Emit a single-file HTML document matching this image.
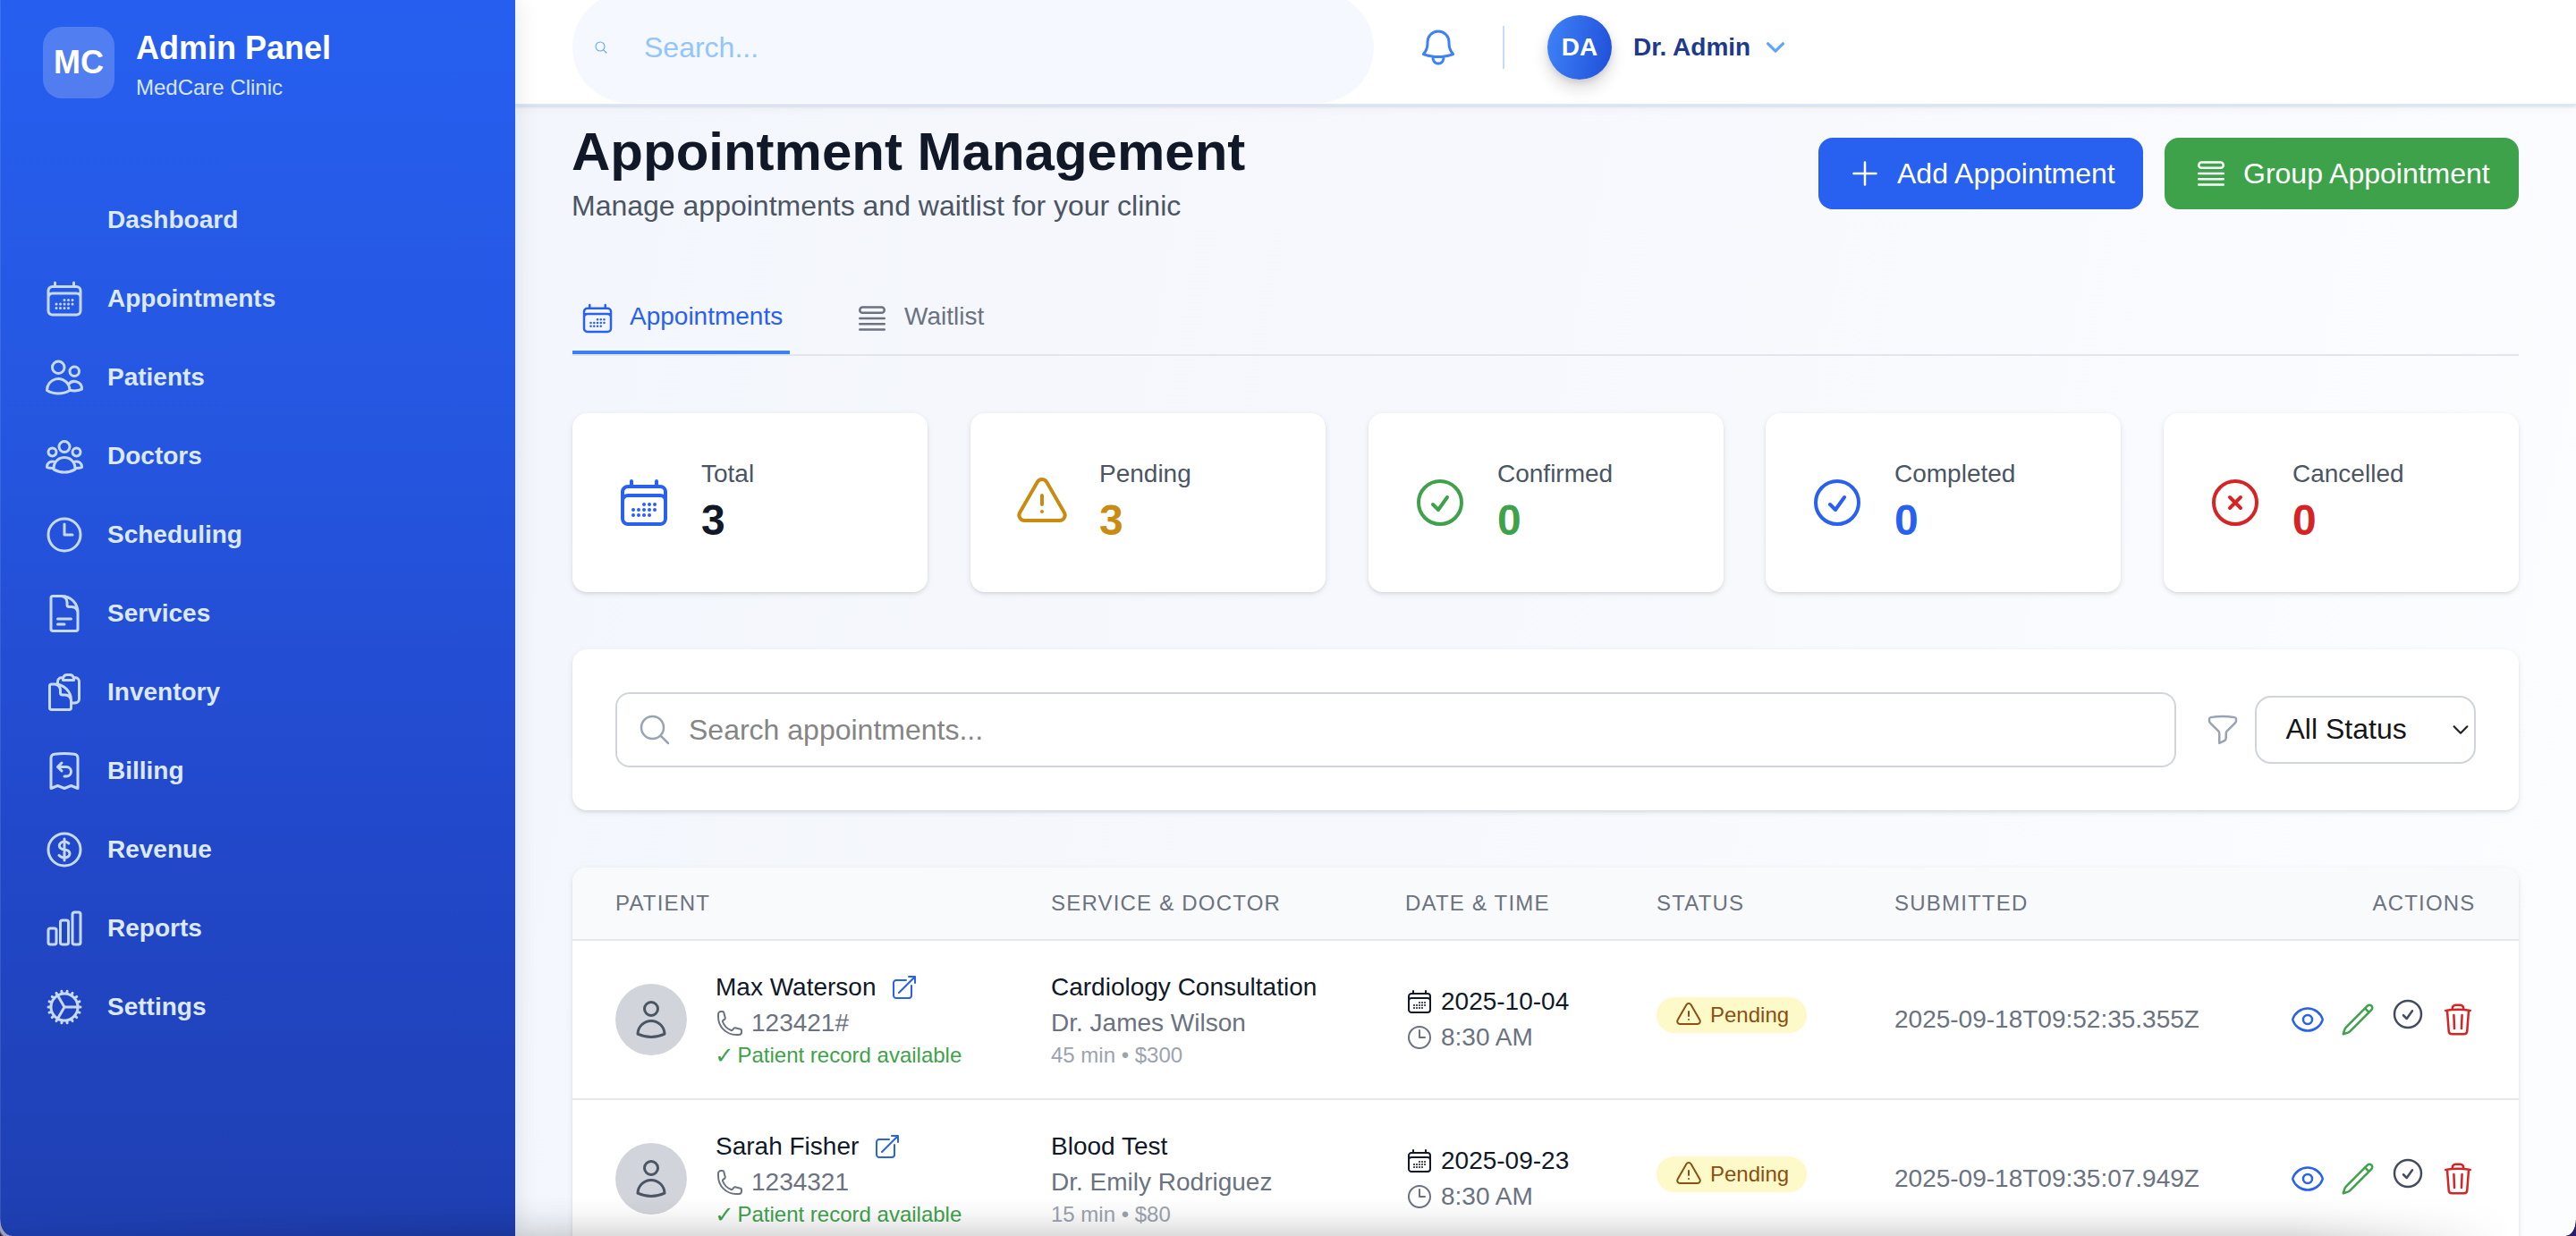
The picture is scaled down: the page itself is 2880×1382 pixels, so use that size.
<!DOCTYPE html>
<html lang="en">
<head>
<meta charset="utf-8">
<title>Appointment Management - MedCare Clinic Admin Panel</title>
<style>
*{box-sizing:border-box;margin:0;padding:0}
html,body{width:2880px;height:1382px;overflow:hidden}
body{position:relative;font-family:"Liberation Sans",Arial,Helvetica,sans-serif;color:#111827;background:#f6f8fd;-webkit-font-smoothing:antialiased}
svg{display:block;flex:none}
.ic{fill:none;stroke:currentColor;stroke-width:1.5;stroke-linecap:round;stroke-linejoin:round}
.abs{position:absolute}

/* main background */
#mainbg{left:576px;top:0;width:2304px;height:1382px;background:linear-gradient(100deg,#f3f6fc 0%,#f6f8fd 45%,#fcfdff 100%)}

/* sidebar */
#side{left:0;top:0;width:576px;height:1382px;background:linear-gradient(180deg,#265fef 0%,#2556e0 35%,#2249cc 65%,#1f3fb2 100%);box-shadow:0 0 26px rgba(15,23,60,.11);z-index:5}
#logo{left:48px;top:30px;width:80px;height:80px;border-radius:21px;background:rgba(255,255,255,.2);color:#fff;font-weight:700;font-size:36px;line-height:80px;text-align:center}
#brand{left:152px;top:26px;color:#fff}
#brand .t{font-size:36px;line-height:56px;font-weight:700;white-space:nowrap}
#brand .s{font-size:24px;line-height:32px;color:#d6e6fe;white-space:nowrap}
#nav{left:0;top:202px;width:576px}
#nav .it{height:88px;display:flex;align-items:center;padding-left:48px;color:#dbe8fe;font-weight:700;font-size:28px;line-height:40px}
#nav .it svg{width:48px;height:48px;margin-right:24px;color:#c6dafd}
#nav .it .noic{width:48px;height:48px;margin-right:24px}

/* top header */
#top{left:576px;top:0;width:2304px;height:118px;background:#fff;border-bottom:2px solid #dbe6fb;box-shadow:0 1px 3px rgba(15,23,42,.13),0 4px 10px rgba(15,23,42,.04);z-index:3;overflow:hidden}
#pill{left:64px;top:-9px;width:896px;height:124px;border-radius:62px;background:#f5f8fe}
#pill svg{position:absolute;left:24px;top:54px;width:16px;height:16px;color:#60a5fa}
#pill .ph{position:absolute;left:80px;top:38px;font-size:32px;line-height:48px;color:#93c5fd}
#bell{left:1008px;top:29px;width:48px;height:48px;color:#3b82f6}
#vdiv{left:1104px;top:29px;width:2px;height:48px;background:#c7dcfc}
#ava{left:1154px;top:17px;width:72px;height:72px;border-radius:50%;background:linear-gradient(100deg,#3f83f8 0%,#1f4fd8 100%);box-shadow:0 10px 18px rgba(0,0,0,.14),0 3px 6px rgba(0,0,0,.10);color:#fff;font-weight:700;font-size:28px;line-height:72px;text-align:center}
#uname{left:1250px;top:33px;font-size:28px;line-height:40px;font-weight:700;color:#1e3a8a;white-space:nowrap}
#chev{left:1393px;top:37px;width:32px;height:32px;color:#60a5fa}

/* page heading */
#title{left:639px;top:133.500px;font-size:60px;line-height:72px;font-weight:700;color:#111827;white-space:nowrap}
#subtitle{left:639px;top:206px;font-size:32px;line-height:48px;color:#4b5563;white-space:nowrap}
.btn{top:154px;height:80px;border-radius:16px;color:#fff;font-size:32px;line-height:48px;display:flex;align-items:center;padding-left:32px;white-space:nowrap}
.btn svg{width:40px;height:40px;margin-right:16px}
#badd{left:2033px;width:363px;background:#2860f0}
#bgrp{left:2420px;width:396px;background:#3ea24a}

/* tabs */
#tabs{left:640px;top:320px;width:2176px;height:78px;border-bottom:2px solid #e3e5ea}
.tab{position:absolute;top:0;height:76px;display:flex;align-items:center;padding:16px 8px 20px;font-size:28px;line-height:40px;white-space:nowrap;color:#6b7280}
.tab svg{width:40px;height:40px;margin-right:16px}
.tab span{position:relative;top:-2px}
.tab.on{color:#2860f0;border-bottom:4px solid #3b80f6;padding-bottom:16px}

/* stat cards */
.card{background:#fff;border-radius:16px;box-shadow:0 2px 6px rgba(0,0,0,.1),0 2px 4px -2px rgba(0,0,0,.1)}
.stat{top:462px;width:397px;height:200px}
.stat svg{position:absolute;left:48px;top:68px;width:64px;height:64px}
.stat .l{position:absolute;left:144px;top:48px;font-size:28px;line-height:40px;color:#4b5563;white-space:nowrap}
.stat .n{position:absolute;left:144px;top:88px;font-size:48px;line-height:64px;font-weight:700;white-space:nowrap}

/* search card */
#scard{left:640px;top:726px;width:2176px;height:180px}
#sinput{left:48px;top:48px;width:1745px;height:84px;border:2px solid #d1d5db;border-radius:16px;background:#fff}
#sinput svg{position:absolute;left:22px;top:20px;width:40px;height:40px;color:#9aa3b2}
#sinput .ph{position:absolute;left:80px;top:16px;font-size:32px;line-height:48px;color:#858585;white-space:nowrap}
#funnel{left:1825px;top:70px;width:40px;height:40px;color:#9aa3b2}
#sel{left:1881px;top:52px;width:247px;height:76px;border:2px solid #d1d5db;border-radius:18px;background:#fff;font-size:32px;line-height:70.500px;padding-left:32.500px;color:#161616;white-space:nowrap}
#sel svg{position:absolute;left:215.750px;top:27.700px;width:24px;height:16px;color:#222}

/* table */
#tcard{left:640px;top:970px;width:2176px;height:460px;overflow:hidden}
#thead{left:0;top:0;width:2176px;height:80px;background:#f9fafc;border-bottom:2px solid #e5e7eb;box-sizing:content-box}
#thead div{position:absolute;top:24px;font-size:24px;line-height:32px;letter-spacing:1.2px;color:#6b7280;white-space:nowrap}
.row{position:absolute;left:0;width:2176px;height:178px;border-bottom:2px solid #e5e7eb;background:#fff}
.row>*{position:absolute}
.avc{left:48px;top:48px;width:80px;height:80px;border-radius:50%;background:#d1d5db;color:#4b5563}
.avc svg{position:absolute;left:16px;top:16px;width:48px;height:48px}
.t28{font-size:28px;line-height:40px;white-space:nowrap}
.t24{font-size:24px;line-height:32px;white-space:nowrap}
.ck{font-family:"DejaVu Sans","Liberation Sans",sans-serif;display:inline-block;width:17.800px;font-size:26px;line-height:20px;text-indent:-1px;position:relative;top:.500px}
.g9{color:#111827}.g5{color:#6b7280}.g4{color:#9ca3af}.gr{color:#3ea24a}
.row svg.s32{width:32px;height:32px}
.row svg.s40{width:40px;height:40px}
.badge{left:1212px;top:63px;width:168px;height:40px;border-radius:20px;background:#fef9c8;color:#8a4f12}
.badge svg{position:absolute;left:20px;top:4px;width:32px;height:32px}
.badge span{position:absolute;left:60px;top:4px;font-size:24px;line-height:32px}

#botshade{left:0;top:1338px;width:2880px;height:44px;z-index:20;background:linear-gradient(180deg,rgba(0,0,0,0) 0%,rgba(0,0,0,.025) 35%,rgba(0,0,0,.075) 70%,rgba(0,0,0,.14) 100%);-webkit-mask-image:linear-gradient(90deg,rgba(0,0,0,.3) 0%,#000 22%,#000 89%,rgba(0,0,0,.55) 93%,transparent 97.500%);mask-image:linear-gradient(90deg,rgba(0,0,0,.3) 0%,#000 22%,#000 89%,rgba(0,0,0,.55) 93%,transparent 97.500%);pointer-events:none}
#cbl{left:0;top:1363px;width:13px;height:19px;z-index:21;background:radial-gradient(ellipse 13px 19px at 100% 0,rgba(0,0,0,0) 95%,#9da1b8 101%,#a3a6b8 116%,#1c1644 134%)}
#ledge{left:0;top:0;width:1px;height:1382px;z-index:20;background:rgba(255,255,255,.11)}
#cbr{left:2869px;top:1364px;width:11px;height:18px;z-index:21;background:radial-gradient(ellipse 11px 18px at 0 0,rgba(0,0,0,0) 94%,#2b1c6c 100%)}
</style>
</head>
<body>
<svg width="0" height="0" style="position:absolute"><defs>
<path id="p-cal" d="M6.750 3v2.250M17.250 3v2.250M3 18.750V7.500a2.250 2.250 0 0 1 2.250-2.250h13.500A2.250 2.250 0 0 1 21 7.500v11.250m-18 0A2.250 2.250 0 0 0 5.250 21h13.500A2.250 2.250 0 0 0 21 18.750m-18 0v-7.500A2.250 2.250 0 0 1 5.250 9h13.500A2.250 2.250 0 0 1 21 11.250v7.500m-9-6h.008v.008H12v-.008ZM12 15h.008v.008H12V15Zm0 2.250h.008v.008H12v-.008ZM9.750 15h.008v.008H9.750V15Zm0 2.250h.008v.008H9.750v-.008ZM7.500 15h.008v.008H7.500V15Zm0 2.250h.008v.008H7.500v-.008Zm6.750-4.500h.008v.008h-.008v-.008Zm0 2.250h.008v.008h-.008V15Zm0 2.250h.008v.008h-.008v-.008Zm2.250-4.500h.008v.008H16.500v-.008Zm0 2.250h.008v.008H16.500V15Z"/>
<path id="p-warn" d="M12 9v3.750m-9.303 3.376c-.866 1.500.217 3.374 1.948 3.374h14.710c1.730 0 2.813-1.874 1.948-3.374L13.949 3.378c-.866-1.500-3.032-1.500-3.898 0L2.697 16.126ZM12 15.750h.007v.008H12v-.008Z"/>
<path id="p-chk" d="M9 12.750 11.250 15 15 9.750M21 12a9 9 0 1 1-18 0 9 9 0 0 1 18 0Z"/>
<path id="p-clock" d="M12 6v6h4.500m4.500 0a9 9 0 1 1-18 0 9 9 0 0 1 18 0Z"/>
<path id="p-user" d="M15.750 6a3.750 3.750 0 1 1-7.500 0 3.750 3.750 0 0 1 7.500 0ZM4.501 20.118a7.500 7.500 0 0 1 14.998 0A17.933 17.933 0 0 1 12 21.750c-2.676 0-5.216-.584-7.499-1.632Z"/>
<path id="p-ext" d="M13.500 6H5.250A2.250 2.250 0 0 0 3 8.250v10.500A2.250 2.250 0 0 0 5.250 21h10.500A2.250 2.250 0 0 0 18 18.750V10.500m-10.500 6L21 3m0 0h-5.250M21 3v5.250"/>
<path id="p-phone" d="M2.250 6.750c0 8.284 6.716 15 15 15h2.250a2.250 2.250 0 0 0 2.250-2.250v-1.372c0-.516-.351-.966-.852-1.091l-4.423-1.106c-.44-.11-.902.055-1.173.417l-.97 1.293c-.282.376-.769.542-1.210.38a12.035 12.035 0 0 1-7.143-7.143c-.162-.441.004-.928.380-1.210l1.293-.97c.363-.271.527-.734.417-1.173L6.963 3.102a1.125 1.125 0 0 0-1.091-.852H4.500A2.250 2.250 0 0 0 2.250 4.500v2.250Z"/>
<path id="p-eye" d="M2.036 12.322a1.012 1.012 0 0 1 0-.639C3.423 7.510 7.360 4.500 12 4.500c4.638 0 8.573 3.007 9.963 7.178.07.207.07.431 0 .639C20.577 16.490 16.640 19.500 12 19.500c-4.638 0-8.573-3.007-9.963-7.178ZM15 12a3 3 0 1 1-6 0 3 3 0 0 1 6 0Z"/>
<path id="p-pen" d="m16.862 4.487 1.687-1.688a1.875 1.875 0 1 1 2.652 2.652L6.832 19.820a4.500 4.500 0 0 1-1.897 1.130l-2.685.8.8-2.685a4.500 4.500 0 0 1 1.130-1.897L16.863 4.487Zm0 0L19.500 7.125"/>
<path id="p-trash" d="m14.740 9-.346 9m-4.788 0L9.260 9m9.968-3.210c.342.052.682.107 1.022.166m-1.022-.165L18.160 19.673a2.250 2.250 0 0 1-2.244 2.077H8.084a2.250 2.250 0 0 1-2.244-2.077L4.772 5.790m14.456 0a48.108 48.108 0 0 0-3.478-.397m-12 .562c.34-.059.68-.114 1.022-.165m0 0a48.110 48.110 0 0 1 3.478-.397m7.500 0v-.916c0-1.180-.91-2.164-2.090-2.201a51.964 51.964 0 0 0-3.320 0c-1.180.037-2.090 1.022-2.090 2.201v.916m7.500 0a48.667 48.667 0 0 0-7.500 0"/>
</defs></svg>
<div id="mainbg" class="abs"></div>

<!-- TOP HEADER -->
<div id="top" class="abs">
  <div id="pill" class="abs">
    <svg viewBox="0 0 24 24" class="ic" style="stroke-width:1.650"><path d="m21 21-5.197-5.197m0 0A7.5 7.5 0 1 0 5.196 5.196a7.5 7.5 0 0 0 10.607 10.607Z"/></svg>
    <div class="ph">Search...</div>
  </div>
  <svg id="bell" class="abs ic" viewBox="0 0 24 24"><path d="M14.857 17.082a23.848 23.848 0 0 0 5.454-1.31A8.967 8.967 0 0 1 18 9.75V9A6 6 0 0 0 6 9v.75a8.967 8.967 0 0 1-2.312 6.022c1.733.64 3.56 1.085 5.455 1.31m5.714 0a24.255 24.255 0 0 1-5.714 0m5.714 0a3 3 0 1 1-5.714 0"/></svg>
  <div id="vdiv" class="abs"></div>
  <div id="ava" class="abs">DA</div>
  <div id="uname" class="abs">Dr. Admin</div>
  <svg id="chev" class="abs ic" viewBox="0 0 32 32" style="stroke-width:3.2"><path d="M7.600 11.800 16 20.200 24.400 11.800"/></svg>
</div>

<!-- SIDEBAR -->
<div id="side" class="abs">
  <div id="logo" class="abs">MC</div>
  <div id="brand" class="abs"><div class="t">Admin Panel</div><div class="s">MedCare Clinic</div></div>
  <div id="nav" class="abs">
    <div class="it"><span class="noic"></span>Dashboard</div>
    <div class="it"><svg viewBox="0 0 24 24" class="ic"><path d="M6.75 3v2.25M17.25 3v2.25M3 18.75V7.5a2.25 2.25 0 0 1 2.25-2.25h13.5A2.25 2.25 0 0 1 21 7.5v11.25m-18 0A2.25 2.25 0 0 0 5.25 21h13.5A2.25 2.25 0 0 0 21 18.75m-18 0v-7.5A2.25 2.25 0 0 1 5.25 9h13.5A2.25 2.25 0 0 1 21 11.25v7.5m-9-6h.008v.008H12v-.008ZM12 15h.008v.008H12V15Zm0 2.25h.008v.008H12v-.008ZM9.75 15h.008v.008H9.75V15Zm0 2.25h.008v.008H9.75v-.008ZM7.5 15h.008v.008H7.5V15Zm0 2.25h.008v.008H7.5v-.008Zm6.75-4.5h.008v.008h-.008v-.008Zm0 2.25h.008v.008h-.008V15Zm0 2.25h.008v.008h-.008v-.008Zm2.25-4.5h.008v.008H16.5v-.008Zm0 2.25h.008v.008H16.5V15Z"/></svg>Appointments</div>
    <div class="it"><svg viewBox="0 0 24 24" class="ic"><path d="M15 19.128a9.38 9.38 0 0 0 2.625.372 9.337 9.337 0 0 0 4.121-.952 4.125 4.125 0 0 0-7.533-2.493M15 19.128v-.003c0-1.113-.285-2.16-.786-3.07M15 19.128v.106A12.318 12.318 0 0 1 8.624 21c-2.331 0-4.512-.645-6.374-1.766l-.001-.109a6.375 6.375 0 0 1 11.964-3.07M12 6.375a3.375 3.375 0 1 1-6.75 0 3.375 3.375 0 0 1 6.75 0Zm8.250 2.25a2.625 2.625 0 1 1-5.250 0 2.625 2.625 0 0 1 5.250 0Z"/></svg>Patients</div>
    <div class="it"><svg viewBox="0 0 24 24" class="ic"><path d="M18 18.72a9.094 9.094 0 0 0 3.741-.479 3 3 0 0 0-4.682-2.72m.94 3.198.001.031c0 .225-.012.447-.037.666A11.944 11.944 0 0 1 12 21c-2.17 0-4.207-.576-5.963-1.584A6.062 6.062 0 0 1 6 18.719m12 0a5.971 5.971 0 0 0-.941-3.197m0 0A5.995 5.995 0 0 0 12 12.750a5.995 5.995 0 0 0-5.058 2.772m0 0a3 3 0 0 0-4.681 2.720 8.986 8.986 0 0 0 3.740.477m.94-3.197a5.971 5.971 0 0 0-.94 3.197M15 6.750a3 3 0 1 1-6 0 3 3 0 0 1 6 0Zm6 3a2.250 2.250 0 1 1-4.500 0 2.250 2.250 0 0 1 4.500 0Zm-13.500 0a2.250 2.250 0 1 1-4.500 0 2.250 2.250 0 0 1 4.500 0Z"/></svg>Doctors</div>
    <div class="it"><svg viewBox="0 0 24 24" class="ic"><path d="M12 6v6h4.500m4.500 0a9 9 0 1 1-18 0 9 9 0 0 1 18 0Z"/></svg>Scheduling</div>
    <div class="it"><svg viewBox="0 0 24 24" class="ic"><path d="M19.500 14.250v-2.625a3.375 3.375 0 0 0-3.375-3.375h-1.500A1.125 1.125 0 0 1 13.500 7.125v-1.500a3.375 3.375 0 0 0-3.375-3.375H8.250m0 12.750h7.500m-7.500 3H12M10.500 2.250H5.625c-.621 0-1.125.504-1.125 1.125v17.250c0 .621.504 1.125 1.125 1.125h12.750c.621 0 1.125-.504 1.125-1.125V11.250a9 9 0 0 0-9-9Z"/></svg>Services</div>
    <div class="it"><svg viewBox="0 0 24 24" class="ic"><path d="M8.250 7.500V6.108c0-1.135.845-2.098 1.976-2.192.373-.03.748-.057 1.123-.08M15.750 18H18a2.250 2.250 0 0 0 2.250-2.250V6.108c0-1.135-.845-2.098-1.976-2.192a48.424 48.424 0 0 0-1.123-.08M15.750 18.750v-1.875a3.375 3.375 0 0 0-3.375-3.375h-1.500a1.125 1.125 0 0 1-1.125-1.125v-1.500A3.375 3.375 0 0 0 6.375 7.500H5.250m11.900-3.664A2.251 2.251 0 0 0 15 2.250h-1.500a2.251 2.251 0 0 0-2.150 1.586m5.800 0c.065.21.1.433.1.664v.750h-6V4.500c0-.231.035-.454.1-.664M6.750 7.500H4.875c-.621 0-1.125.504-1.125 1.125v12c0 .621.504 1.125 1.125 1.125h9.750c.621 0 1.125-.504 1.125-1.125V16.500a9 9 0 0 0-9-9Z"/></svg>Inventory</div>
    <div class="it"><svg viewBox="0 0 24 24" class="ic"><path d="M8.250 9.750h4.875a2.625 2.625 0 0 1 0 5.250H12M8.250 9.750 10.500 7.500M8.250 9.750 10.500 12m9-7.243V21.750l-3.750-1.500-3.750 1.500-3.750-1.500-3.750 1.500V4.757c0-1.108.806-2.057 1.907-2.185a48.507 48.507 0 0 1 11.186 0c1.100.128 1.907 1.077 1.907 2.185Z"/></svg>Billing</div>
    <div class="it"><svg viewBox="0 0 24 24" class="ic"><path d="M12 6v12m-3-2.818.879.659c1.171.879 3.070.879 4.242 0 1.172-.879 1.172-2.303 0-3.182C13.536 12.219 12.768 12 12 12c-.725 0-1.450-.22-2.003-.659-1.106-.879-1.106-2.303 0-3.182s2.900-.879 4.006 0l.415.330M21 12a9 9 0 1 1-18 0 9 9 0 0 1 18 0Z"/></svg>Revenue</div>
    <div class="it"><svg viewBox="0 0 24 24" class="ic"><path d="M3 13.125C3 12.504 3.504 12 4.125 12h2.250c.621 0 1.125.504 1.125 1.125v6.750C7.500 20.496 6.996 21 6.375 21h-2.250A1.125 1.125 0 0 1 3 19.875v-6.750ZM9.750 8.625c0-.621.504-1.125 1.125-1.125h2.250c.621 0 1.125.504 1.125 1.125v11.250c0 .621-.504 1.125-1.125 1.125h-2.250a1.125 1.125 0 0 1-1.125-1.125V8.625ZM16.500 4.125c0-.621.504-1.125 1.125-1.125h2.250C20.496 3 21 3.504 21 4.125v15.750c0 .621-.504 1.125-1.125 1.125h-2.250a1.125 1.125 0 0 1-1.125-1.125V4.125Z"/></svg>Reports</div>
    <div class="it"><svg viewBox="0 0 24 24" class="ic"><path d="M4.500 12a7.500 7.500 0 0 0 15 0m-15 0a7.500 7.500 0 1 1 15 0m-15 0H3m16.500 0H21m-1.500 0H12m-8.457 3.077 1.410-.513m14.095-5.130 1.410-.513M5.106 17.785l1.150-.964m11.490-9.642 1.149-.964M7.501 19.795l.750-1.300m7.500-12.990.750-1.300m-6.063 16.658.260-1.477m2.605-14.772.260-1.477m0 17.726-.260-1.477M10.698 4.614l-.260-1.477M16.500 19.794l-.750-1.299M7.500 4.205 12 12m6.894 5.785-1.149-.964M6.256 7.178l-1.150-.964m15.352 8.864-1.410-.513M4.954 9.435l-1.410-.514M12.002 12l-3.750 6.495"/></svg>Settings</div>
  </div>
</div>


<div id="title" class="abs">Appointment Management</div>
<div id="subtitle" class="abs">Manage appointments and waitlist for your clinic</div>
<div id="badd" class="abs btn"><svg viewBox="0 0 24 24" class="ic"><path d="M12 4.500v15m7.500-7.500h-15"/></svg>Add Appointment</div>
<div id="bgrp" class="abs btn"><svg viewBox="0 0 24 24" class="ic"><path d="M3.750 12h16.500m-16.500 3.750h16.500M3.750 19.500h16.500M5.625 4.500h12.750a1.875 1.875 0 0 1 0 3.750H5.625a1.875 1.875 0 0 1 0-3.750Z"/></svg>Group Appointment</div>

<div id="tabs" class="abs">
  <div class="tab on" style="left:0"><svg viewBox="0 0 24 24" class="ic"><use href="#p-cal"/></svg><span>Appointments</span></div>
  <div class="tab" style="left:307px"><svg viewBox="0 0 24 24" class="ic"><path d="M3.750 12h16.500m-16.500 3.750h16.500M3.750 19.500h16.500M5.625 4.500h12.750a1.875 1.875 0 0 1 0 3.750H5.625a1.875 1.875 0 0 1 0-3.750Z"/></svg><span>Waitlist</span></div>
</div>

<div class="abs card stat" style="left:640px"><svg viewBox="0 0 24 24" class="ic" style="color:#2860f0"><use href="#p-cal"/></svg><div class="l">Total</div><div class="n" style="color:#111827">3</div></div>
<div class="abs card stat" style="left:1085px"><svg viewBox="0 0 24 24" class="ic" style="color:#c98b10"><use href="#p-warn"/></svg><div class="l">Pending</div><div class="n" style="color:#c98b10">3</div></div>
<div class="abs card stat" style="left:1530px"><svg viewBox="0 0 24 24" class="ic" style="color:#3ea24a"><use href="#p-chk"/></svg><div class="l">Confirmed</div><div class="n" style="color:#3ea24a">0</div></div>
<div class="abs card stat" style="left:1974px"><svg viewBox="0 0 24 24" class="ic" style="color:#2860f0"><use href="#p-chk"/></svg><div class="l">Completed</div><div class="n" style="color:#2860f0">0</div></div>
<div class="abs card stat" style="left:2419px"><svg viewBox="0 0 24 24" class="ic" style="color:#d62324"><path d="m9.750 9.750 4.500 4.500m0-4.500-4.500 4.500M21 12a9 9 0 1 1-18 0 9 9 0 0 1 18 0Z"/></svg><div class="l">Cancelled</div><div class="n" style="color:#d62324">0</div></div>


<div id="scard" class="abs card">
  <div id="sinput" class="abs"><svg viewBox="0 0 24 24" class="ic"><path d="m21 21-5.197-5.197m0 0A7.500 7.500 0 1 0 5.196 5.196a7.500 7.500 0 0 0 10.607 10.607Z"/></svg><div class="ph">Search appointments...</div></div>
  <svg id="funnel" class="abs ic" viewBox="0 0 24 24"><path d="M12 3c2.755 0 5.455.232 8.083.678.533.09.917.556.917 1.096v1.044a2.250 2.250 0 0 1-.659 1.591l-5.432 5.432a2.250 2.250 0 0 0-.659 1.591v2.927a2.250 2.250 0 0 1-1.244 2.013L9.750 21v-6.568a2.250 2.250 0 0 0-.659-1.591L3.659 7.409A2.250 2.250 0 0 1 3 5.818V4.774c0-.54.384-1.006.917-1.096A48.320 48.320 0 0 1 12 3Z"/></svg>
  <div id="sel" class="abs">All Status<svg viewBox="0 0 24 16" class="ic" style="stroke-width:2.200"><path d="M4.600 4.300 12 11.700 19.400 4.300"/></svg></div>
</div>

<div id="tcard" class="abs card">
  <div id="thead" class="abs">
    <div style="left:48px">PATIENT</div>
    <div style="left:535px">SERVICE &amp; DOCTOR</div>
    <div style="left:931px">DATE &amp; TIME</div>
    <div style="left:1212px">STATUS</div>
    <div style="left:1478px">SUBMITTED</div>
    <div style="right:48.500px">ACTIONS</div>
  </div>

<div class="row" style="top:82px">
  <div class="avc"><svg viewBox="0 0 24 24" class="ic"><use href="#p-user"/></svg></div>
  <div class="t28 g9" style="left:160px;top:32px">Max Waterson</div>
  <svg class="ic s32" viewBox="0 0 24 24" style="left:354.500px;top:36px;color:#2860f0"><use href="#p-ext"/></svg>
  <svg class="ic s32 g5" viewBox="0 0 24 24" style="left:160px;top:76px"><use href="#p-phone"/></svg>
  <div class="t28 g5" style="left:200px;top:72px">123421#</div>
  <div class="t24 gr" style="left:160px;top:112px"><span class="ck">&#10003;</span> Patient record available</div>
  <div class="t28 g9" style="left:535px;top:32px">Cardiology Consultation</div>
  <div class="t28 g5" style="left:535px;top:72px">Dr. James Wilson</div>
  <div class="t24 g4" style="left:535px;top:112px">45 min &bull; $300</div>
  <svg class="ic s32 g9" viewBox="0 0 24 24" style="left:931px;top:52px"><use href="#p-cal"/></svg>
  <div class="t28 g9" style="left:971px;top:48px">2025-10-04</div>
  <svg class="ic s32 g5" viewBox="0 0 24 24" style="left:931px;top:92px"><use href="#p-clock"/></svg>
  <div class="t28 g5" style="left:971px;top:88px">8:30 AM</div>
  <div class="badge"><svg viewBox="0 0 24 24" class="ic"><use href="#p-warn"/></svg><span>Pending</span></div>
  <div class="t28 g5" style="left:1478px;top:68px">2025-09-18T09:52:35.355Z</div>
  <svg class="ic s40" viewBox="0 0 24 24" style="left:1920px;top:68px;color:#2860f0"><use href="#p-eye"/></svg>
  <svg class="ic s40" viewBox="0 0 24 24" style="left:1976px;top:68px;color:#3ea24a"><use href="#p-pen"/></svg>
  <svg class="ic s40" viewBox="0 0 24 24" style="left:2032px;top:62px;color:#434c5d"><use href="#p-chk"/></svg>
  <svg class="ic s40" viewBox="0 0 24 24" style="left:2088px;top:68px;color:#d62324"><use href="#p-trash"/></svg>
</div>
<div class="row" style="top:260px">
  <div class="avc"><svg viewBox="0 0 24 24" class="ic"><use href="#p-user"/></svg></div>
  <div class="t28 g9" style="left:160px;top:32px">Sarah Fisher</div>
  <svg class="ic s32" viewBox="0 0 24 24" style="left:335.750px;top:36px;color:#2860f0"><use href="#p-ext"/></svg>
  <svg class="ic s32 g5" viewBox="0 0 24 24" style="left:160px;top:76px"><use href="#p-phone"/></svg>
  <div class="t28 g5" style="left:200px;top:72px">1234321</div>
  <div class="t24 gr" style="left:160px;top:112px"><span class="ck">&#10003;</span> Patient record available</div>
  <div class="t28 g9" style="left:535px;top:32px">Blood Test</div>
  <div class="t28 g5" style="left:535px;top:72px">Dr. Emily Rodriguez</div>
  <div class="t24 g4" style="left:535px;top:112px">15 min &bull; $80</div>
  <svg class="ic s32 g9" viewBox="0 0 24 24" style="left:931px;top:52px"><use href="#p-cal"/></svg>
  <div class="t28 g9" style="left:971px;top:48px">2025-09-23</div>
  <svg class="ic s32 g5" viewBox="0 0 24 24" style="left:931px;top:92px"><use href="#p-clock"/></svg>
  <div class="t28 g5" style="left:971px;top:88px">8:30 AM</div>
  <div class="badge"><svg viewBox="0 0 24 24" class="ic"><use href="#p-warn"/></svg><span>Pending</span></div>
  <div class="t28 g5" style="left:1478px;top:68px">2025-09-18T09:35:07.949Z</div>
  <svg class="ic s40" viewBox="0 0 24 24" style="left:1920px;top:68px;color:#2860f0"><use href="#p-eye"/></svg>
  <svg class="ic s40" viewBox="0 0 24 24" style="left:1976px;top:68px;color:#3ea24a"><use href="#p-pen"/></svg>
  <svg class="ic s40" viewBox="0 0 24 24" style="left:2032px;top:62px;color:#434c5d"><use href="#p-chk"/></svg>
  <svg class="ic s40" viewBox="0 0 24 24" style="left:2088px;top:68px;color:#d62324"><use href="#p-trash"/></svg>
</div>
</div>

<!-- window chrome: bottom shadow + rounded corners -->
<div id="botshade" class="abs"></div>
<div id="ledge" class="abs"></div>
<div id="cbl" class="abs"></div>
<div id="cbr" class="abs"></div>



</body>
</html>
